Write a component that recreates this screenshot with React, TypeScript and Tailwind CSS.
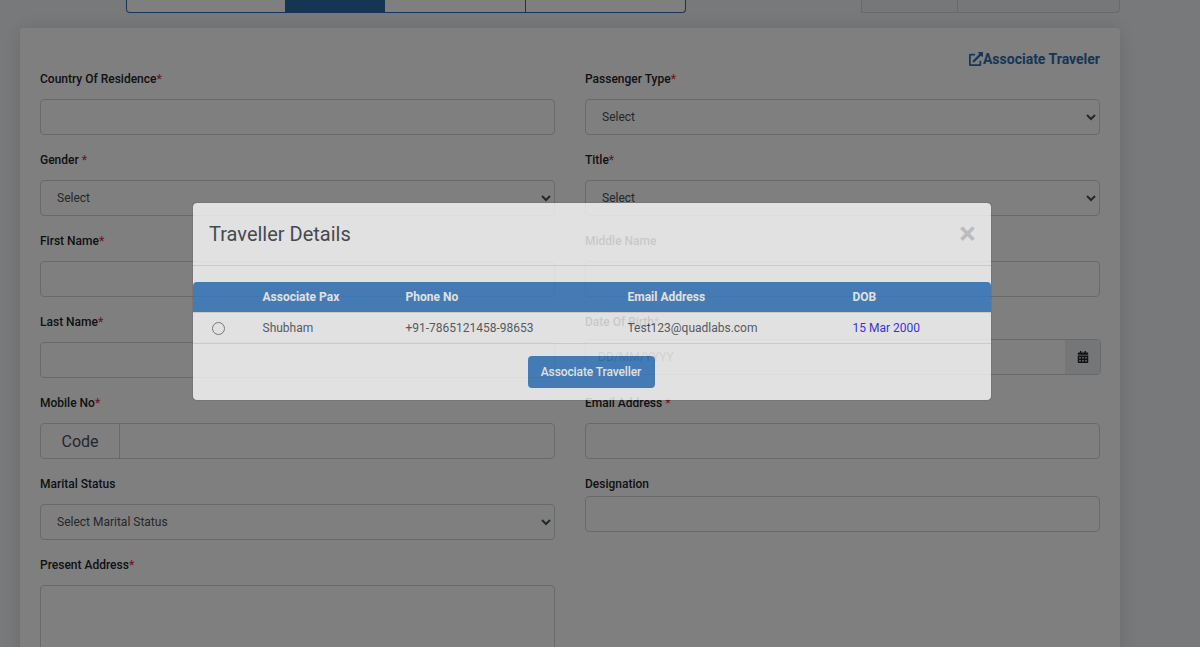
import { FaCalendarAlt, FaExternalLinkAlt } from "react-icons/fa";

const inputCls = "block h-9 w-full rounded border border-[#ced4da] bg-white";

function Label({ text, star, gap, className = "" }: { text: string; star?: boolean; gap?: boolean; className?: string }) {
  return (
    <div className={`text-xs leading-[18px] font-medium text-[#212529] ${className}`}>
      {text}
      {gap ? " " : ""}
      {star ? <span className="text-[#dc3545]">*</span> : null}
    </div>
  );
}

function Select({ text }: { text: string }) {
  return (
    <select className="block h-9 w-full rounded border border-[#ced4da] bg-white pl-3 pr-2 text-xs text-[#495057]">
      <option>{text}</option>
    </select>
  );
}

export default function App() {
  return (
    <div className="relative h-[647px] w-[1200px] overflow-hidden bg-[#f1f3f5] font-['Roboto',sans-serif]">
      <div className="flex h-[13px] w-[1120px]">
        <div className="ml-[126px] flex h-[13px] w-[560px] rounded-b border-x border-b border-[#2a6cb0] bg-white">
          <div className="w-[158px]" />
          <div className="w-[100px] bg-[#2a6aa8]" />
          <div className="w-[141px] border-r border-[#2a6cb0]" />
          <div className="flex-1" />
        </div>
        <div className="ml-auto flex h-[13px] w-[259px] rounded-br border-x border-b border-[#ced4da] bg-[#eceef0]">
          <div className="w-[96px] border-r border-[#ced4da]" />
        </div>
      </div>

      <div className="ml-5 mt-[15px] h-[640px] w-[1100px] rounded bg-white px-5 shadow-[0_0_20px_rgba(0,0,0,0.12)]">
        <div className="h-[21px]" />
        <div className="flex h-0 justify-end">
          <div className="flex h-5 items-center text-sm font-bold text-[#2a6cb0]">
            <FaExternalLinkAlt className="text-sm" />
            Associate Traveler
          </div>
        </div>
        <div className="flex gap-[30px] pt-[21px]">
          <div className="w-[515px]">
            <Label text="Country Of Residence" star />
            <div className={`${inputCls} mt-[11px]`} />
            <Label text="Gender" star gap className="mt-4" />
            <div className="mt-[11px]"><Select text="Select" /></div>
            <Label text="First Name" star className="mt-4" />
            <div className={`${inputCls} mt-[11px]`} />
            <Label text="Last Name" star className="mt-4" />
            <div className={`${inputCls} mt-[11px]`} />
            <Label text="Mobile No" star className="mt-4" />
            <div className="mt-[11px] flex h-9 rounded border border-[#ced4da] bg-white">
              <div className="flex w-[79px] items-center justify-center border-r border-[#ced4da] pt-px text-base text-[#495057]">Code</div>
            </div>
            <Label text="Marital Status" className="mt-4" />
            <div className="mt-[11px]"><Select text="Select Marital Status" /></div>
            <Label text="Present Address" star className="mt-4" />
            <div className="mt-[11px] h-[100px] rounded border border-[#ced4da] bg-white" />
          </div>
          <div className="w-[515px]">
            <Label text="Passenger Type" star />
            <div className="mt-[11px]"><Select text="Select" /></div>
            <Label text="Title" star className="mt-4" />
            <div className="mt-[11px]"><Select text="Select" /></div>
            <Label text="Middle Name" className="mt-4" />
            <div className={`${inputCls} mt-[11px]`} />
            <Label text="Date Of Birth" star className="mt-4" />
            <div className="mt-2 flex h-9 w-[516px] rounded border border-[#ced4da] bg-white">
              <div className="flex flex-1 items-center pl-3 text-xs text-[#6c757d]">DD/MM/YYYY</div>
              <div className="flex w-[35px] items-center justify-center rounded-r bg-[#e9ecef] text-xs text-[#212529]">
                <FaCalendarAlt />
              </div>
            </div>
            <Label text="Email Address" star gap className="mt-[19px]" />
            <div className={`${inputCls} mt-[11px]`} />
            <Label text="Designation" className="mt-4" />
            <div className={`${inputCls} mt-[3px]`} />
          </div>
        </div>
      </div>

      <div className="absolute inset-0 bg-black/50" />

      <div className="absolute inset-0 pl-[193px] pt-[203px]">
        <div className="h-[197px] w-[798px] rounded bg-white opacity-[0.77] shadow-[0_0_1px_rgba(0,0,0,0.8)]">
          <div className="flex h-[63px] items-center justify-between border-b border-[#dee2e6] pl-4 pr-[15px]">
            <div className="text-xl font-normal text-[#343a40]">Traveller Details</div>
            <div className="-mt-[2px] text-[32px] leading-none font-bold text-black/20">×</div>
          </div>
          <div className="mt-4 grid h-[30px] grid-cols-[69.5px_143px_222px_225px_1fr] items-center rounded-t bg-[#337bc5] text-xs font-bold text-white">
            <div />
            <div>Associate Pax</div>
            <div>Phone No</div>
            <div>Email Address</div>
            <div>DOB</div>
          </div>
          <div className="grid h-[32px] grid-cols-[69.5px_143px_222px_225px_1fr] items-center border-b border-t border-[#dee2e6] text-xs text-[#495057]">
            <div className="pl-[19px]">
              <input type="radio" className="block h-[13px] w-[13px]" />
            </div>
            <div>Shubham</div>
            <div>+91-7865121458-98653</div>
            <div>Test123@quadlabs.com</div>
            <div className="text-[#1a1aff]">15 Mar 2000</div>
          </div>
          <div className="flex justify-center pr-[2px] pt-3">
            <button className="h-8 w-[127px] rounded bg-[#337bc5] text-xs font-medium tracking-[-0.1px] text-white">Associate Traveller</button>
          </div>
        </div>
      </div>
    </div>
  );
}
